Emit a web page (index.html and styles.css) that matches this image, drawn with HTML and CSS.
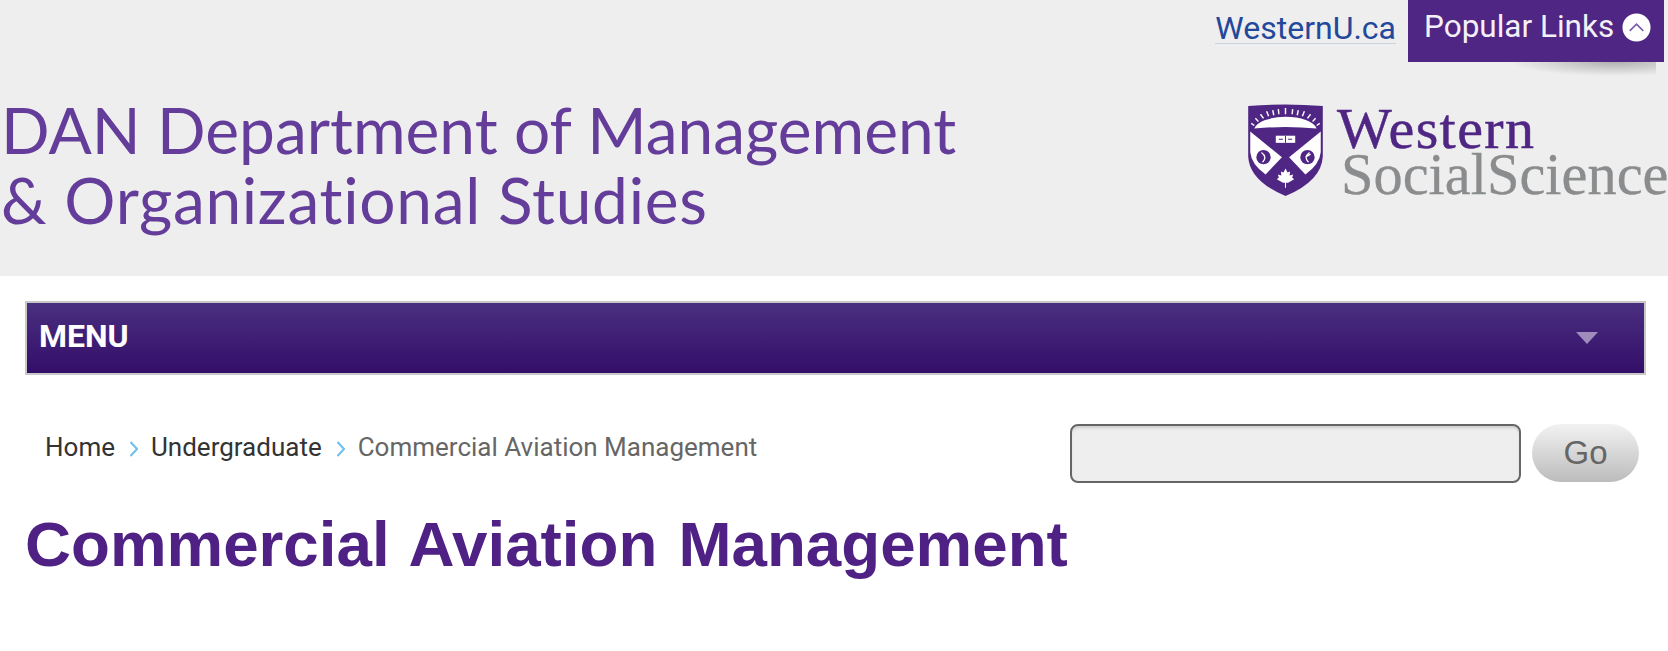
FILE: index.html
```html
<!DOCTYPE html>
<html lang="en">
<head>
<meta charset="utf-8">
<title>Commercial Aviation Management</title>
<link rel="stylesheet" href="styles.css">
</head>
<body>
<header class="masthead">
  <div class="toplinks">
    <a class="western-link" href="#">WesternU.ca</a>
    <div class="popular">
      <span>Popular Links</span>
      <svg class="popular-icon" viewBox="0 0 30 30" width="29" height="29"><circle cx="15" cy="15" r="14.5" fill="#fff"/><path d="M8 18.5 L15 11.5 L22 18.5" fill="none" stroke="#7a5aa6" stroke-width="1.6"/></svg>
    </div>
  </div>
  <div class="brand">
    <div class="dept">
      <div>DAN Department of Management</div>
      <div class="dept-second">&amp; Organizational Studies</div>
    </div>
    <div class="logo">
      <svg class="crest" viewBox="0 0 73 91" width="75" height="93">
        <path d="M0 3 Q36.5 0 73 3 L73 52 Q72 76 36.5 91 Q1 76 0 52 Z" fill="#4f2683"/>
        <path d="M6 25 A31 14 0 0 1 67 25 Q36.5 22 6 25 Z" fill="#fff"/>
        <path d="M6 22 L3 20 M10 18 L7 15 M15 15 L12 11 M20 13 L18 8 M25 12 L24 7 M30 11 L29.5 6 M36.5 11 V5 M43 11 L43.5 6 M48 12 L49 7 M53 13 L55 8 M58 15 L61 11 M63 18 L66 15 M67 22 L70 20" stroke="#fff" stroke-width="1.4"/>
        <path d="M2 28 L33 53 L17 70 Q3 60 2 48 Z" fill="#fff"/>
        <path d="M71 28 L40 53 L56 70 Q70 60 71 48 Z" fill="#fff"/>
        <rect x="27" y="32" width="19" height="7" fill="#fff"/>
        <path d="M36.5 32 V39 M30 35.5 H34 M39 35.5 H43" stroke="#4f2683" stroke-width="1"/>
        <circle cx="15" cy="53" r="7" fill="#4f2683"/>
        <circle cx="58" cy="53" r="7" fill="#4f2683"/>
        <path d="M13 48.5 Q19 53 14 58 M60 48.5 Q54 53 59 58 M56 53 L61 50" fill="none" stroke="#fff" stroke-width="1.3"/>
        <path d="M36.5 64 L38.5 68 L41 67 L40.5 71 L44 70 L43 73 L45 74.5 L39 78 L37 78 V83 H36 V78 L34 78 L28 74.5 L30 73 L29 70 L32.5 71 L32 67 L34.5 68 Z" fill="#fff"/>
      </svg>
      <div class="wordmark">
        <div class="wm-top">Western</div>
        <div class="wm-bottom">SocialScience</div>
      </div>
    </div>
  </div>
</header>
<main class="content">
  <nav class="menu">
    <span>MENU</span>
    <span class="menu-caret"></span>
  </nav>
  <div class="tools">
    <ol class="crumbs">
      <li><a href="#">Home</a></li>
      <li class="sep"><svg viewBox="0 0 10 16" width="10" height="16"><path d="M2.5 1 L9 8 L2.5 15" fill="none" stroke="#6fc0ee" stroke-width="2"/></svg></li>
      <li><a href="#">Undergraduate</a></li>
      <li class="sep"><svg viewBox="0 0 10 16" width="10" height="16"><path d="M2.5 1 L9 8 L2.5 15" fill="none" stroke="#6fc0ee" stroke-width="2"/></svg></li>
      <li class="current">Commercial Aviation Management</li>
    </ol>
    <form class="search">
      <input class="search-input" type="text" aria-label="Search">
      <button class="search-go" type="button">Go</button>
    </form>
  </div>
  <h1 class="title">Commercial Aviation Management</h1>
</main>
</body>
</html>
```
FILE: styles.css
```css
* { box-sizing: border-box; }
html, body { margin: 0; padding: 0; }
body {
  background: #fff;
  height: 651px;
  overflow: hidden;
  font-family: Roboto, "Liberation Sans", sans-serif;
}
.masthead {
  background: #eee;
  height: 276px;
  overflow: hidden;
}
.toplinks {
  display: flex;
  justify-content: flex-end;
  align-items: flex-start;
  padding-right: 4px;
}
.western-link {
  color: #23489b;
  font-size: 32px;
  line-height: 38px;
  margin-top: 9px;
  margin-right: 12px;
  text-decoration: none;
  border-bottom: 1px solid #c9d2e4;
  height: 35px;
}
.popular {
  position: relative;
  width: 256px;
  height: 62px;
  background: #4f2683;
  color: #f4f0f8;
  display: flex;
  align-items: flex-start;
  gap: 8px;
  padding: 9px 0 0 16px;
  font-size: 31.5px;
  line-height: 36px;
}
.popular::after {
  content: "";
  position: absolute;
  top: 100%;
  right: 8px;
  width: 150px;
  height: 14px;
  background: radial-gradient(ellipse 70% 100% at 72% 0, rgba(0,0,0,.26), transparent);
}
.popular-icon { margin-top: 4px; flex: none; }
.brand {
  display: flex;
  justify-content: space-between;
  padding-top: 33px;
}
.dept {
  font-family: Lato, sans-serif;
  font-variant-ligatures: none;
  color: #643c9a;
  font-size: 64px;
  line-height: 70px;
  padding-left: 1px;
  white-space: nowrap;
}
.dept-second { letter-spacing: .7px; }
.logo {
  display: flex;
  gap: 11px;
  width: 420px;
  flex: none;
  white-space: nowrap;
  overflow: hidden;
  padding-top: 8px;
}
.crest { flex: none; }
.wordmark {
  font-family: "Liberation Serif", serif;
  padding: 3px 0 0 3px;
}
.wm-top {
  color: #4f2683;
  font-size: 58px;
  line-height: 46px;
  letter-spacing: 1.4px;
  -webkit-text-stroke: .5px #4f2683;
}
.wm-bottom {
  color: #8a8c8e;
  font-size: 58.4px;
  line-height: 46px;
  margin-left: 4px;
  -webkit-text-stroke: .3px #8a8c8e;
}
.content { padding: 25px 22px 0 25px; }
.menu {
  height: 74px;
  border: 2px solid #c8c8c8;
  background: linear-gradient(#4a2f7f, #330e69);
  color: #fff;
  font-weight: 700;
  font-size: 32px;
  display: flex;
  align-items: center;
  justify-content: space-between;
  padding: 0 46px 4px 12px;
}
.menu-caret {
  width: 0;
  height: 0;
  border-left: 11px solid transparent;
  border-right: 11px solid transparent;
  border-top: 12px solid #a08bbd;
  margin-top: 4px;
}
.tools {
  display: flex;
  justify-content: space-between;
  align-items: flex-start;
  padding-top: 49px;
}
.crumbs {
  list-style: none;
  margin: 0;
  padding: 0 0 0 20px;
  display: flex;
  align-items: center;
  gap: 13px;
  font-size: 26px;
  line-height: 46px;
  color: #666;
}
.crumbs a { color: #333; text-decoration: none; }
.sep { display: flex; align-items: center; padding-top: 3px; }
.search { display: flex; align-items: flex-start; gap: 11px; padding-right: 7px; }
.search-input {
  width: 451px;
  height: 59px;
  margin: 0;
  background: #eee;
  border: 2px solid #666;
  border-radius: 8px;
  box-shadow: inset 0 3px 3px -1px rgba(0,0,0,.14);
}
.search-go {
  width: 107px;
  height: 58px;
  border: 0;
  border-radius: 29px;
  background: linear-gradient(#f2f2f2, #bcbcbc);
  color: #666;
  font-family: "Liberation Sans", sans-serif;
  font-size: 33px;
  padding: 0;
}
.title {
  margin: 24px 0 0;
  color: #4f2185;
  font-family: "Liberation Sans", sans-serif;
  font-weight: 700;
  font-size: 63.7px;
  line-height: 74px;
  word-spacing: 3.5px;
  white-space: nowrap;
}
```
